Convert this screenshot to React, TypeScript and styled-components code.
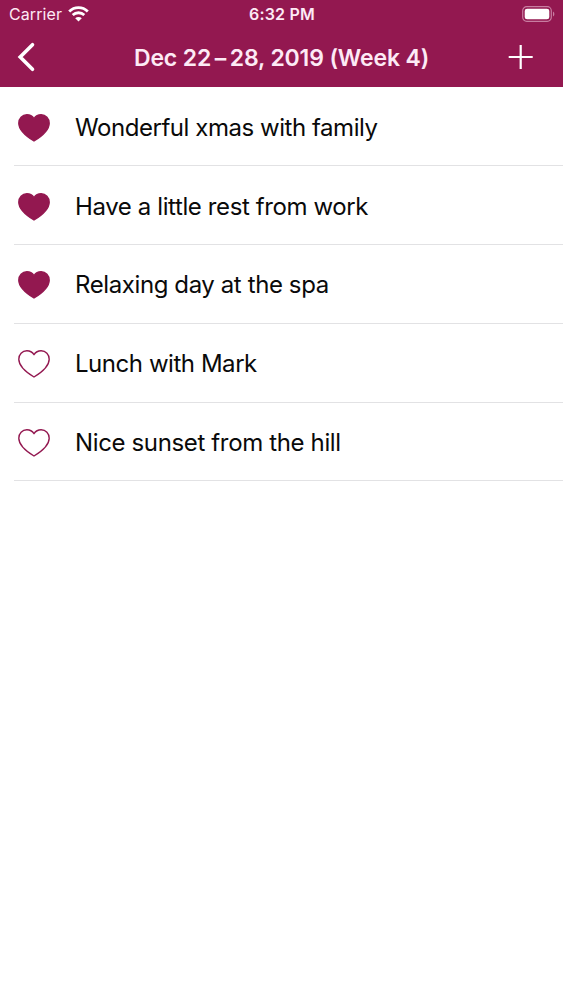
import React from 'react';
import styled, { createGlobalStyle } from 'styled-components';

const GlobalStyle = createGlobalStyle`
  * { box-sizing: border-box; }
  body { margin: 0; background: #fff; font-family: Inter, sans-serif; }
`;

const Screen = styled.main`
  width: 563px;
  height: 1000px;
  background: #fff;
  overflow: hidden;
`;

const Header = styled.header`
  height: 87px;
  background: #931850;
  color: #fdeaf5;
`;

const StatusBar = styled.div`
  height: 28px;
  padding: 0 8px 0 9px;
  display: grid;
  grid-template-columns: 1fr auto 1fr;
  align-items: center;
`;

const Network = styled.div`
  display: flex;
  align-items: center;
  gap: 6px;
`;

const StatusText = styled.span<{ $bold?: boolean; $tracking: number }>`
  font-size: 16px;
  line-height: 20px;
  font-weight: ${(p) => (p.$bold ? 600 : 400)};
  letter-spacing: ${(p) => p.$tracking}px;
  white-space: nowrap;
`;

const Battery = styled.svg`
  display: block;
  justify-self: end;
`;

const NavBar = styled.nav`
  height: 59px;
  padding: 0 29px 0 16px;
  display: grid;
  grid-template-columns: 40px 1fr 27px;
  align-items: center;
`;

const IconButton = styled.button`
  display: flex;
  padding: 0 0 1px;
  border: 0;
  background: none;
  color: #fff;
`;

const Title = styled.h1`
  margin: 0;
  text-align: center;
  font-size: 23px;
  line-height: 30px;
  font-weight: 600;
  letter-spacing: -0.15px;
  white-space: nowrap;
`;

const List = styled.ul`
  margin: 0;
  padding: 0.4px 0 0;
  list-style: none;
`;

const Row = styled.li`
  height: 78.8px;
  margin-left: 14px;
  padding: 3px 0 0 4px;
  border-bottom: 1px solid #e2e2e4;
  display: flex;
  align-items: center;
  gap: 25px;
`;

const RowText = styled.span<{ $tracking: number }>`
  font-size: 24px;
  line-height: 32px;
  color: #0a0a0a;
  letter-spacing: ${(p) => p.$tracking}px;
  white-space: nowrap;
`;

const Heart = ({ filled }: { filled: boolean }) => (
  <svg width="32" height="28" viewBox="0 0 32 28" fill={filled ? '#931850' : 'none'} stroke="#931850" strokeWidth="1.4" strokeLinejoin="round">
    <path d="M16 4.7C14.3 2.1 11.8.8 8.9.8C4.2.8.8 4.4.8 9.2C.8 14.8 5.6 20.6 16 27C26.4 20.6 31.2 14.8 31.2 9.2C31.2 4.4 27.8.8 23.1.8C20.2.8 17.7 2.1 16 4.7Z" />
  </svg>
);

const entries = [
  { text: 'Wonderful xmas with family', favorite: true, tracking: -0.45 },
  { text: 'Have a little rest from work', favorite: true, tracking: -0.39 },
  { text: 'Relaxing day at the spa', favorite: true, tracking: -0.4 },
  { text: 'Lunch with Mark', favorite: false, tracking: -0.45 },
  { text: 'Nice sunset from the hill', favorite: false, tracking: -0.36 },
];

export default function App() {
  return (
    <Screen>
      <GlobalStyle />
      <Header>
        <StatusBar>
          <Network>
            <StatusText $tracking={0.1}>Carrier</StatusText>
            <svg width="21" height="16" viewBox="0 0 21 16" fill="none" stroke="#fff" strokeWidth="2.8">
              <path d="M1.2 5.4C6.4.3 14.6.3 19.8 5.4" />
              <path d="M4.7 9C8 6 13 6 16.3 9" />
              <path d="M10.5 15.6L7.2 12.3C9.1 10.6 11.9 10.6 13.8 12.3Z" fill="#fff" stroke="none" />
            </svg>
          </Network>
          <StatusText $bold $tracking={0.2}>6:32 PM</StatusText>
          <Battery width="33" height="16" viewBox="0 0 33 16">
            <rect x=".7" y=".7" width="28.6" height="14.6" rx="4" fill="none" stroke="#c87da1" strokeWidth="1.2" />
            <rect x="2.7" y="2.7" width="24.6" height="10.6" rx="2.4" fill="#fff" />
            <path d="M31 5.5C32.8 6.3 32.8 9.7 31 10.5Z" fill="#c87da1" />
          </Battery>
        </StatusBar>
        <NavBar>
          <IconButton aria-label="Back">
            <svg width="20" height="30" viewBox="0 0 20 30" fill="none" stroke="currentColor" strokeWidth="3.6" strokeLinecap="round" strokeLinejoin="miter">
              <path d="M16.5 2.7L4.2 15L16.5 27.3" />
            </svg>
          </IconButton>
          <Title>Dec 22{'\u2009'}–{'\u2009'}28, 2019 (Week 4)</Title>
          <IconButton aria-label="Add entry">
            <svg width="27" height="26" viewBox="0 0 27 26" fill="none" stroke="currentColor" strokeWidth="2.2">
              <path d="M1.7 13H25.7M13.7 1V25" />
            </svg>
          </IconButton>
        </NavBar>
      </Header>
      <List>
        {entries.map((e) => (
          <Row key={e.text}>
            <Heart filled={e.favorite} />
            <RowText $tracking={e.tracking}>{e.text}</RowText>
          </Row>
        ))}
      </List>
    </Screen>
  );
}
